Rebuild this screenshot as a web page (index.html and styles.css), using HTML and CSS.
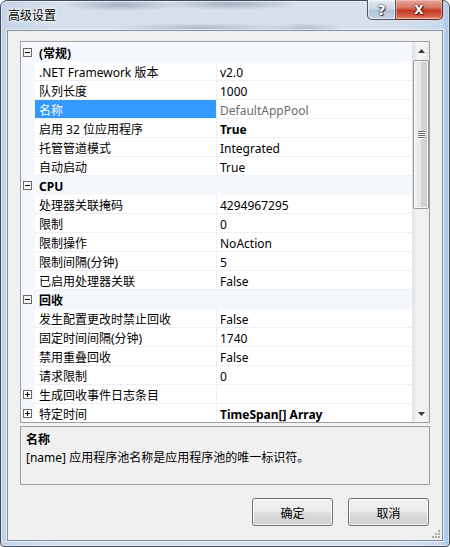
FILE: index.html
```html
<!DOCTYPE html>
<html lang="zh-CN">
<head>
<meta charset="utf-8">
<title>高级设置</title>
<link rel="stylesheet" href="styles.css">
</head>
<body>
<div class="window">
  <div class="titlebar">
    <span class="title">高级设置</span>
    <div class="caption-btns">
      <div class="cbtn help">?</div>
      <div class="cbtn close">X</div>
    </div>
  </div>
  <div class="client">
    <div class="pgrid">
      <div class="rows">
        <div class="row cat"><span class="gut"><svg width="9" height="9" viewBox="0 0 9 9"><rect x="0.5" y="0.5" width="8" height="8" fill="#fff" stroke="#6a6a6a"/><path d="M2 4.5h5" stroke="#000"/></svg></span><span class="catname">(常规)</span></div>
        <div class="row"><span class="gut"></span><span class="name">.NET Framework 版本</span><span class="val">v2.0</span></div>
        <div class="row"><span class="gut"></span><span class="name">队列长度</span><span class="val">1000</span></div>
        <div class="row"><span class="gut"></span><span class="name sel">名称</span><span class="val ro">DefaultAppPool</span></div>
        <div class="row"><span class="gut"></span><span class="name">启用 32 位应用程序</span><span class="val b">True</span></div>
        <div class="row"><span class="gut"></span><span class="name">托管管道模式</span><span class="val">Integrated</span></div>
        <div class="row"><span class="gut"></span><span class="name">自动启动</span><span class="val">True</span></div>
        <div class="row cat"><span class="gut"><svg width="9" height="9" viewBox="0 0 9 9"><rect x="0.5" y="0.5" width="8" height="8" fill="#fff" stroke="#6a6a6a"/><path d="M2 4.5h5" stroke="#000"/></svg></span><span class="catname">CPU</span></div>
        <div class="row"><span class="gut"></span><span class="name">处理器关联掩码</span><span class="val">4294967295</span></div>
        <div class="row"><span class="gut"></span><span class="name">限制</span><span class="val">0</span></div>
        <div class="row"><span class="gut"></span><span class="name">限制操作</span><span class="val">NoAction</span></div>
        <div class="row"><span class="gut"></span><span class="name">限制间隔(分钟)</span><span class="val">5</span></div>
        <div class="row"><span class="gut"></span><span class="name">已启用处理器关联</span><span class="val">False</span></div>
        <div class="row cat"><span class="gut"><svg width="9" height="9" viewBox="0 0 9 9"><rect x="0.5" y="0.5" width="8" height="8" fill="#fff" stroke="#6a6a6a"/><path d="M2 4.5h5" stroke="#000"/></svg></span><span class="catname">回收</span></div>
        <div class="row"><span class="gut"></span><span class="name">发生配置更改时禁止回收</span><span class="val">False</span></div>
        <div class="row"><span class="gut"></span><span class="name">固定时间间隔(分钟)</span><span class="val">1740</span></div>
        <div class="row"><span class="gut"></span><span class="name">禁用重叠回收</span><span class="val">False</span></div>
        <div class="row"><span class="gut"></span><span class="name">请求限制</span><span class="val">0</span></div>
        <div class="row"><span class="gut"><svg width="9" height="9" viewBox="0 0 9 9"><rect x="0.5" y="0.5" width="8" height="8" fill="#fff" stroke="#6a6a6a"/><path d="M2 4.5h5M4.5 2v5" stroke="#000"/></svg></span><span class="name">生成回收事件日志条目</span><span class="val"></span></div>
        <div class="row"><span class="gut"><svg width="9" height="9" viewBox="0 0 9 9"><rect x="0.5" y="0.5" width="8" height="8" fill="#fff" stroke="#6a6a6a"/><path d="M2 4.5h5M4.5 2v5" stroke="#000"/></svg></span><span class="name">特定时间</span><span class="val b">TimeSpan[] Array</span></div>
      </div>
      <div class="vscroll">
        <div class="sarrow"><svg width="7" height="4" viewBox="0 0 7 4"><path d="M0 4L3.5 0L7 4Z" fill="#3c3c3c"/></svg></div>
        <div class="strack">
          <div class="thumb">
            <svg width="7" height="8" viewBox="0 0 7 8"><path d="M0 0.5h7M0 2.5h7M0 4.5h7M0 6.5h7" stroke="#6f6f6f"/><path d="M0 1.5h7M0 3.5h7M0 5.5h7M0 7.5h7" stroke="#fafafa"/></svg>
          </div>
        </div>
        <div class="sarrow"><svg width="7" height="4" viewBox="0 0 7 4"><path d="M0 0L3.5 4L7 0Z" fill="#3c3c3c"/></svg></div>
      </div>
    </div>
    <div class="help-pane">
      <div class="help-title">名称</div>
      <div class="help-desc">[name] 应用程序池名称是应用程序池的唯一标识符。</div>
    </div>
    <div class="buttons">
      <button class="btn">确定</button>
      <button class="btn">取消</button>
    </div>
    <svg class="grip" width="8" height="8" viewBox="0 0 8 8"><g fill="#a8a8a8"><rect x="6" y="0" width="2" height="2"/><rect x="3" y="3" width="2" height="2"/><rect x="6" y="3" width="2" height="2"/><rect x="0" y="6" width="2" height="2"/><rect x="3" y="6" width="2" height="2"/><rect x="6" y="6" width="2" height="2"/></g></svg>
  </div>
</div>
</body>
</html>
```

FILE: styles.css
```css
html, body {
  margin: 0;
  padding: 0;
}
body {
  width: 450px;
  height: 547px;
  overflow: hidden;
  font-family: "Noto Sans", "Noto Sans CJK SC", sans-serif;
  font-size: 12px;
  color: #000;
  background: #ffffff;
}
.window {
  box-sizing: border-box;
  width: 450px;
  height: 547px;
  border: 1px solid #3f4e5e;
  border-radius: 7px 7px 4px 4px;
  display: flex;
  flex-direction: column;
  background:
    radial-gradient(ellipse 60px 6px at 120px 4px, rgba(70,90,115,0.35), rgba(70,90,115,0) 100%),
    radial-gradient(ellipse 70px 6px at 230px 3px, rgba(70,90,115,0.35), rgba(70,90,115,0) 100%),
    radial-gradient(ellipse 90px 5px at 200px 27px, rgba(70,90,115,0.28), rgba(70,90,115,0) 100%),
    radial-gradient(ellipse 40px 5px at 305px 27px, rgba(70,90,115,0.25), rgba(70,90,115,0) 100%),
    linear-gradient(to right, #c3d4e6 0px, #d6e0eb 60px, #d8e1eb 380px, #c9d9ea 440px, #a9c6e6 447px, #c9dbee 449px);
  box-shadow: inset 0 0 0 1px rgba(255,255,255,0.45);
}
.titlebar {
  height: 29px;
  flex: none;
  display: flex;
  justify-content: space-between;
  align-items: flex-start;
}
.title {
  padding: 5px 0 0 7px;
  line-height: 18px;
  font-size: 12px;
  color: #000;
  text-shadow: 0 0 6px #fff, 0 0 3px #fff, 0 0 2px #fff;
  font-family: "Noto Sans CJK SC", sans-serif;
}
.caption-btns {
  display: flex;
  margin: -1px 6px 0 0;
}
.cbtn {
  box-sizing: border-box;
  height: 20px;
  display: flex;
  align-items: center;
  justify-content: center;
  font-family: "DejaVu Sans", sans-serif;
  font-weight: bold;
  color: #fff;
  border: 1px solid #4a5866;
  border-top: none;
}
.cbtn.help {
  width: 29px;
  border-radius: 0 0 0 5px;
  font-size: 14px;
  background: linear-gradient(#e4ebf3 0%, #ccd8e5 45%, #b3c3d6 55%, #c6d4e3 100%);
  text-shadow: 0 0 1px #2f3b48, 0 0 2px #2f3b48, 1px 1px 1px #2f3b48;
  box-shadow: inset 0 0 0 1px rgba(255,255,255,0.5);
}
.cbtn.close {
  width: 47px;
  border-left: none;
  border-color: #5b2a22;
  border-radius: 0 0 5px 0;
  font-size: 12px;
  background: linear-gradient(#e9a89a 0%, #d77565 40%, #c43a25 55%, #d45e48 85%, #e79a84 100%);
  text-shadow: 0 0 1px #4a140c, 0 0 2px #4a140c, 1px 1px 1px #4a140c;
  box-shadow: inset 0 0 0 1px rgba(255,220,210,0.45);
}
.client {
  position: relative;
  box-sizing: border-box;
  height: 511px;
  margin: 0 6px 0 6px;
  flex: none;
  border: 1px solid #7f8fa2;
  background: #f0f0f0;
  padding: 10px 12px 0 12px;
  display: flex;
  flex-direction: column;
  box-shadow: 0 0 0 1px rgba(255,255,255,0.55);
}
.pgrid {
  box-sizing: border-box;
  height: 382px;
  flex: none;
  border: 1px solid #a0a0a0;
  background: #fff;
  display: flex;
  overflow: hidden;
}
.rows {
  flex: 1;
  padding-top: 1px;
  overflow: hidden;
  min-width: 0;
}
.row {
  display: flex;
  height: 19px;
  line-height: 21px;
  white-space: nowrap;
}
.gut {
  box-sizing: border-box;
  width: 14px;
  flex: none;
  background: #f4f7fc;
  display: flex;
  align-items: center;
  padding-left: 2px;
}
.gut svg { display: block; }
.name {
  box-sizing: border-box;
  width: 182px;
  flex: none;
  padding-left: 4px;
  border-right: 1px solid #edf1f7;
  border-bottom: 1px solid #edf1f7;
  overflow: hidden;
}
.name.sel {
  background: #3399ff;
  color: #fff;
}
.val {
  flex: 1;
  padding-left: 3px;
  border-bottom: 1px solid #edf1f7;
  overflow: hidden;
}
.val.b { font-weight: bold; }
.val.ro { color: #6d6d6d; }
.row.cat {
  background: #f4f7fc;
  font-weight: bold;
}
.catname {
  padding-left: 4px;
}
.vscroll {
  box-sizing: border-box;
  width: 17px;
  flex: none;
  display: flex;
  flex-direction: column;
  background: linear-gradient(to right, #e6e6e6, #f3f3f3 30%, #f3f3f3 70%, #e9e9e9);
  border-left: 1px solid #e2e2e2;
}
.sarrow {
  height: 17px;
  flex: none;
  display: flex;
  align-items: center;
  justify-content: center;
}
.sarrow svg { display: block; }
.strack {
  flex: 1;
  padding: 1px 0 0 0;
}
.thumb {
  box-sizing: border-box;
  height: 149px;
  border: 1px solid #979797;
  border-radius: 2px;
  background: linear-gradient(to right, #f1f1f1, #e6e6e6 50%, #d6d6d6 51%, #cfcfcf);
  box-shadow: inset 0 0 0 1px rgba(255,255,255,0.7);
  display: flex;
  align-items: center;
  justify-content: center;
}
.thumb svg { display: block; }
.help-pane {
  box-sizing: border-box;
  height: 59px;
  flex: none;
  margin-top: 3px;
  border: 1px solid #a0a0a0;
  background: #f0f0f0;
  padding: 4px 5px 3px 5px;
  line-height: 18px;
}
.help-title { font-weight: bold; }
.buttons {
  display: flex;
  justify-content: flex-end;
  gap: 15px;
  margin-top: 13px;
  padding-right: 1px;
}
.btn {
  box-sizing: border-box;
  width: 81px;
  height: 28px;
  border: 1px solid #707070;
  border-radius: 3px;
  background: linear-gradient(#f2f2f2 0%, #ebebeb 48%, #dddddd 52%, #cfcfcf 100%);
  box-shadow: inset 0 0 0 1px rgba(255,255,255,0.8);
  font-family: "Noto Sans CJK SC", sans-serif;
  font-size: 12px;
  color: #000;
  padding: 0;
}
.grip {
  position: absolute;
  right: 2px;
  bottom: 2px;
}
```
